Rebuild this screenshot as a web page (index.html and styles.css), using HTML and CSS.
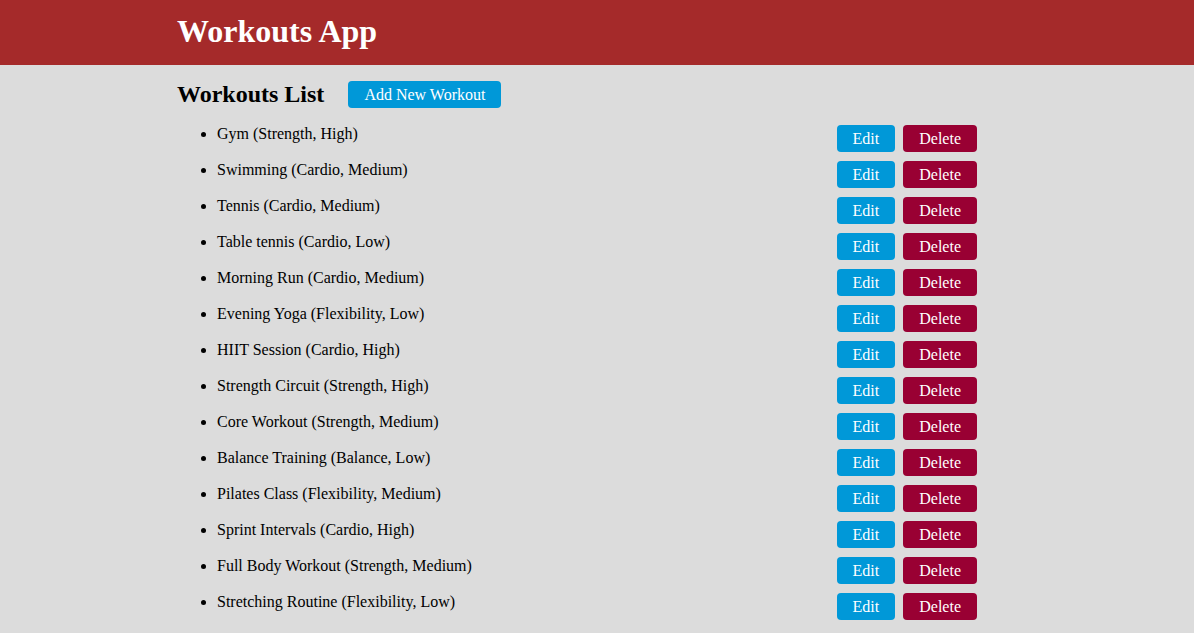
FILE: index.html
```html
<!DOCTYPE html>
<html>
<head>
<meta charset="utf-8">
<title>Workouts App</title>
<link rel="stylesheet" href="styles.css">
</head>
<body>
<header class="app-header">
  <div class="container">
    <h1 class="app-title">Workouts App</h1>
  </div>
</header>
<main class="container">
  <div class="list-head">
    <h2 class="list-title">Workouts List</h2>
    <button class="btn btn-blue">Add New Workout</button>
  </div>
  <ul class="workouts">
    <li><div class="row"><span class="name">Gym (Strength, High)</span><div class="actions"><button class="btn btn-blue">Edit</button><button class="btn btn-red">Delete</button></div></div></li>
    <li><div class="row"><span class="name">Swimming (Cardio, Medium)</span><div class="actions"><button class="btn btn-blue">Edit</button><button class="btn btn-red">Delete</button></div></div></li>
    <li><div class="row"><span class="name">Tennis (Cardio, Medium)</span><div class="actions"><button class="btn btn-blue">Edit</button><button class="btn btn-red">Delete</button></div></div></li>
    <li><div class="row"><span class="name">Table tennis (Cardio, Low)</span><div class="actions"><button class="btn btn-blue">Edit</button><button class="btn btn-red">Delete</button></div></div></li>
    <li><div class="row"><span class="name">Morning Run (Cardio, Medium)</span><div class="actions"><button class="btn btn-blue">Edit</button><button class="btn btn-red">Delete</button></div></div></li>
    <li><div class="row"><span class="name">Evening Yoga (Flexibility, Low)</span><div class="actions"><button class="btn btn-blue">Edit</button><button class="btn btn-red">Delete</button></div></div></li>
    <li><div class="row"><span class="name">HIIT Session (Cardio, High)</span><div class="actions"><button class="btn btn-blue">Edit</button><button class="btn btn-red">Delete</button></div></div></li>
    <li><div class="row"><span class="name">Strength Circuit (Strength, High)</span><div class="actions"><button class="btn btn-blue">Edit</button><button class="btn btn-red">Delete</button></div></div></li>
    <li><div class="row"><span class="name">Core Workout (Strength, Medium)</span><div class="actions"><button class="btn btn-blue">Edit</button><button class="btn btn-red">Delete</button></div></div></li>
    <li><div class="row"><span class="name">Balance Training (Balance, Low)</span><div class="actions"><button class="btn btn-blue">Edit</button><button class="btn btn-red">Delete</button></div></div></li>
    <li><div class="row"><span class="name">Pilates Class (Flexibility, Medium)</span><div class="actions"><button class="btn btn-blue">Edit</button><button class="btn btn-red">Delete</button></div></div></li>
    <li><div class="row"><span class="name">Sprint Intervals (Cardio, High)</span><div class="actions"><button class="btn btn-blue">Edit</button><button class="btn btn-red">Delete</button></div></div></li>
    <li><div class="row"><span class="name">Full Body Workout (Strength, Medium)</span><div class="actions"><button class="btn btn-blue">Edit</button><button class="btn btn-red">Delete</button></div></div></li>
    <li><div class="row"><span class="name">Stretching Routine (Flexibility, Low)</span><div class="actions"><button class="btn btn-blue">Edit</button><button class="btn btn-red">Delete</button></div></div></li>
  </ul>
</main>
</body>
</html>
```

FILE: styles.css
```css
* { box-sizing: border-box; }
html, body {
  margin: 0;
  padding: 0;
  background: #dcdcdc;
  font-family: "Liberation Serif", "Times New Roman", serif;
  font-size: 16px;
  color: #000;
}
.container {
  width: 840px;
  margin: 0 auto;
  padding: 0 40px 0 0;
}
.app-header {
  background: #a52a2a;
  height: 65px;
  display: flex;
  align-items: center;
  padding-bottom: 2px;
}
.app-title {
  margin: 0;
  font-size: 32px;
  font-weight: bold;
  color: #fff;
}
main.container {
  padding-top: 16px;
}
.list-head {
  display: flex;
  align-items: center;
  gap: 24px;
}
.list-title {
  margin: 0;
  font-size: 24px;
  font-weight: bold;
}
.btn {
  font-family: "Liberation Serif", "Times New Roman", serif;
  font-size: 16px;
  color: #fff;
  border: none;
  border-radius: 4px;
  height: 27px;
  padding: 0 16px;
  line-height: 27px;
  cursor: pointer;
}
.btn-blue { background: #0098d8; }
.btn-red { background: #990033; }
.workouts {
  margin: 17px 0 0;
  padding-left: 40px;
}
.workouts li {
  margin-bottom: 9px;
}
.row {
  display: flex;
  justify-content: space-between;
  align-items: flex-start;
}
.actions {
  display: flex;
  gap: 8px;
}
```
